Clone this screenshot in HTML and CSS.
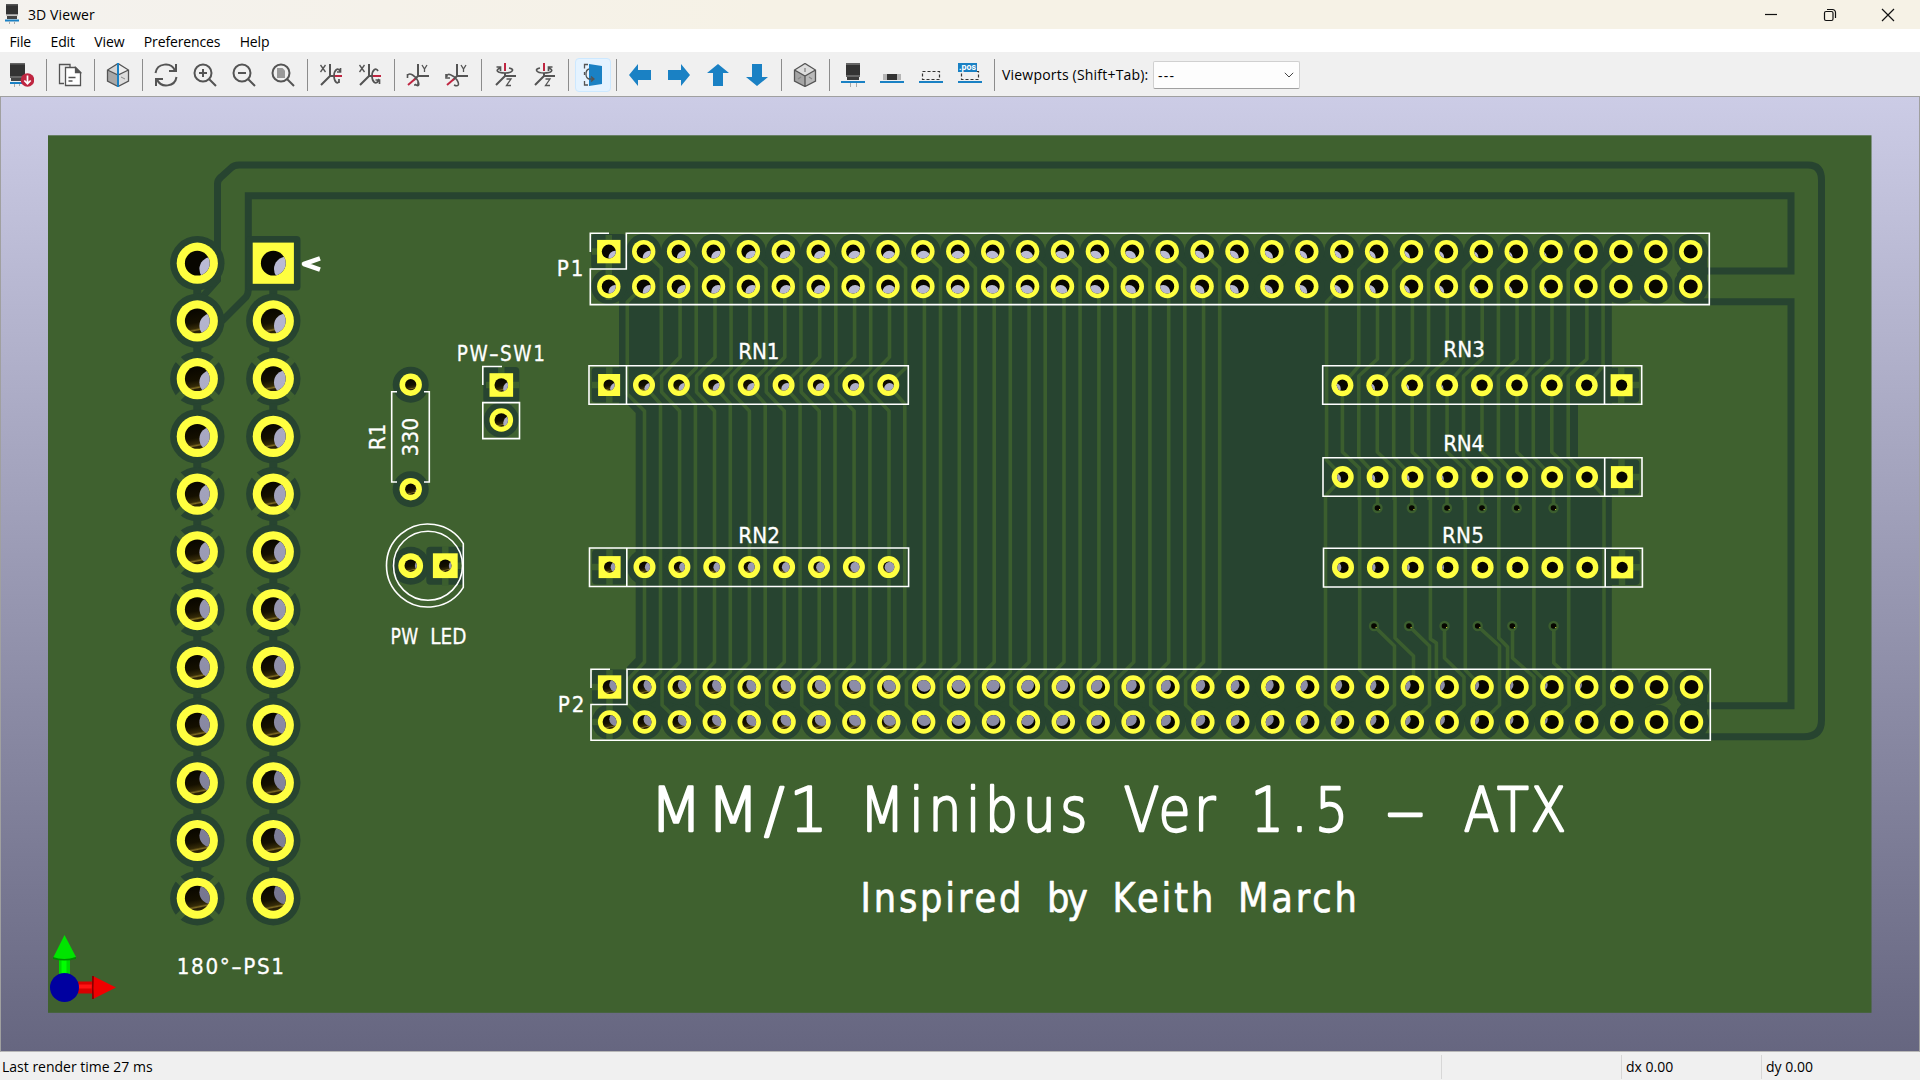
FILE: index.html
```html
<!DOCTYPE html>
<html lang="en">
<head>
<meta charset="utf-8">
<title>3D Viewer</title>
<link rel="stylesheet" href="styles.css">
</head>
<body>
<div class="window">
  <header class="titlebar">
    <svg class="app-icon" viewBox="0 0 14 20"><path fill="#333" d="M1 0h12v11H1z"/><path fill="#555" d="M1 0h12v1.500H1z"/><path fill="#999" d="M1 10h12v1.500H1z"/><path fill="#444" d="M2 12h10v3H2z"/><path fill="#1a81c4" d="M0 15.500h14v2H0z"/><path stroke="#aaa" d="M4.500 17.500V20M9.500 17.500V20"/></svg>
    <span class="title">3D Viewer</span>
    <div class="window-buttons">
      <svg viewBox="0 0 14 14"><path d="M1 6.500h12"/></svg>
      <svg viewBox="0 0 14 14"><rect x="1.500" y="3.500" width="8.500" height="9" rx="1.500"/><path d="M4 1.500h5.500a3 3 0 0 1 3 3V10"/></svg>
      <svg viewBox="0 0 14 14"><path d="M1 1l12 12M13 1L1 13"/></svg>
    </div>
  </header>
  <nav class="menubar"><span>File</span><span>Edit</span><span>View</span><span>Preferences</span><span>Help</span></nav>
  <div class="toolbar">
    <button class="tool"><svg viewBox="0 0 24 24"><path fill="#333" d="M0 0h15v13H0z"/><path fill="#666" d="M0 0h15v1.500H0zM0 13h15v2H0z"/><path fill="#444" d="M1 15h13v3H1z"/><path fill="#1a81c4" d="M0 19h14v2H0z"/><path stroke="#aaa" d="M4.500 21v3M9.500 21v2"/><circle cx="17.500" cy="17" r="6.800" fill="#bf2641"/><path d="M17.500 12.500v8M14.300 17.500l3.200 3.200 3.200-3.200" fill="none" stroke="#fff" stroke-width="1.700"/></svg></button>
    <i class="sep"></i>
    <button class="tool"><svg viewBox="0 0 24 24" class="line"><path d="M6 20.500H1.500v-19H12V4"/><path fill="#fff" d="M7.500 4.500h10l5 5V22.500h-15z"/><path fill="#545454" d="M17.500 4.500v5h5z"/><path d="M10.500 14.500h7M10.500 18h4"/></svg></button>
    <i class="sep"></i>
    <button class="tool"><svg viewBox="0 0 24 24"><path fill="#ddd" d="M12 .500l10.500 6.500v11L12 23.500z"/><path fill="#eee" d="M12 .500L22.500 7 12 12z"/><path fill="#a8a8a8" d="M12 12v11.500L1.500 18V7z"/><path fill="#d5d5d5" d="M12 .500V12L1.500 7z"/><path class="line" d="M12 .500L22.500 7v11L12 23.500 1.500 18V7zM1.500 7L12 12l10.500-5" stroke="#545454" fill="none"/><path d="M15 14l4 2" stroke="#888"/><path stroke="#1a81c4" stroke-width="2" d="M12 0v24"/></svg></button>
    <i class="sep"></i>
    <button class="tool"><svg viewBox="0 0 24 24" class="thick"><path d="M1.500 10C3 0 17-1.500 21 7.500M22 1v7h-7"/><path d="M22.500 14C21 24 7 25.500 3 16.500M2 23v-7h7"/></svg></button>
    <button class="tool"><svg viewBox="0 0 24 24" class="thick"><circle cx="10" cy="10" r="8.500"/><path d="M16 16l7 7M10 6v8M6 10h8"/></svg></button>
    <button class="tool"><svg viewBox="0 0 24 24" class="thick"><circle cx="10" cy="10" r="8.500"/><path d="M16 16l7 7M6 10h8"/></svg></button>
    <button class="tool"><svg viewBox="0 0 24 24" class="thick"><circle cx="10" cy="10" r="8.500"/><path d="M16 16l7 7"/><path fill="#999" stroke="none" d="M6 5h5.500L14 7.500V15H6z"/></svg></button>
    <i class="sep"></i>
    <button class="tool"><svg viewBox="0 0 24 24" class="thick"><path d="M11 1v12L2 22M11 13h3"/><path stroke-width="1.300" d="M1.500 2l5 7M6.500 2l-5 7"/><path stroke="#bf2641" d="M14 13h9"/><path stroke-width="1.700" d="M21 8c-2-4-6-1-6 5s4 9 5 5M18 9h3.500V5M20 16v4"/></svg></button>
    <button class="tool"><svg viewBox="0 0 24 24" class="thick"><path d="M11 1v12L2 22M11 13h3"/><path stroke-width="1.300" d="M1.500 2l5 7M6.500 2l-5 7"/><path stroke="#bf2641" d="M14 13h9"/><path stroke-width="1.700" d="M20 8c-2-4-6-1-6 5s4 9 6 5l1-2M17.500 17h4v4"/></svg></button>
    <i class="sep"></i>
    <button class="tool"><svg viewBox="0 0 24 24" class="thick"><path d="M12 1v12h11M12 13l-4 4"/><path stroke-width="1.300" d="M16 2l2.500 4L21 2M18.500 6v3"/><path stroke="#bf2641" d="M9 16l-7 6"/><path stroke-width="1.600" d="M2 12c1-3 8 1 10 6s0 6-3 3M1.500 15v-4M12 18v4H8"/></svg></button>
    <button class="tool"><svg viewBox="0 0 24 24" class="thick"><path d="M12 1v12h11M12 13l-4 4"/><path stroke-width="1.300" d="M16 2l2.500 4L21 2M18.500 6v3"/><path stroke="#bf2641" d="M9 16l-7 6"/><path stroke-width="1.600" d="M2 14c-1-5 7-2 10 3s1 7-3 5M1 11v4h4"/></svg></button>
    <i class="sep"></i>
    <button class="tool"><svg viewBox="0 0 24 24" class="thick"><path d="M12 10v3h11M12 13l-9 9"/><path stroke-width="1.300" d="M13.500 16h4.500l-4.500 6.500H18"/><path stroke="#bf2641" d="M12 0v8"/><path stroke-width="1.700" d="M16 5c6 1 4 5-4 5S2 7 7 5M3.500 4h4v4"/></svg></button>
    <button class="tool"><svg viewBox="0 0 24 24" class="thick"><path d="M12 10v3h11M12 13l-9 9"/><path stroke-width="1.300" d="M13.500 16h4.500l-4.500 6.500H18"/><path stroke="#bf2641" d="M12 0v8"/><path stroke-width="1.700" d="M8 5c-6 1-4 5 4 5s10-3 5-5M20.500 4h-4v4"/></svg></button>
    <i class="sep"></i>
    <button class="tool active"><svg viewBox="0 0 24 24" class="line"><path d="M7 1.500H3.500v4M3.500 9v3M3.500 18v4H7" stroke-width="1.300"/><path fill="#1a81c4" stroke="none" d="M8 1l13 2v18L8 23z"/><path d="M8 6c-4 1-4 9 0 10h4M10 13.500l3 2.500-3 2.500" stroke-width="1.300"/></svg></button>
    <i class="sep"></i>
    <button class="tool"><svg viewBox="0 0 24 24" class="arrow"><path d="M1 12L10 1v6h13v10H10v6z"/></svg></button>
    <button class="tool"><svg viewBox="0 0 24 24" class="arrow"><path d="M23 12L14 1v6H1v10h13v6z"/></svg></button>
    <button class="tool"><svg viewBox="0 0 24 24" class="arrow"><path d="M12 1l11 9h-6v13H7V10H1z"/></svg></button>
    <button class="tool"><svg viewBox="0 0 24 24" class="arrow"><path d="M12 23l11-9h-6V1H7v13H1z"/></svg></button>
    <i class="sep"></i>
    <button class="tool"><svg viewBox="0 0 24 24"><path fill="#b9b9b9" d="M12 .500L22.500 7v11L12 23.500 1.500 18V7z"/><path fill="#ddd" d="M12 .500L22.500 7 12 13 1.500 7z"/><path fill="#a5a5a5" d="M1.500 7L12 13v10.500L1.500 18z"/><path d="M12 .500L22.500 7v11L12 23.500 1.500 18V7zM1.500 7L12 13l10.500-6M12 13v10.500" stroke="#545454" stroke-width="1.300" fill="none"/><path d="M12 5v4M5 16l3-2M16 14l3 2" stroke="#888" stroke-width="1.300"/></svg></button>
    <i class="sep"></i>
    <button class="tool"><svg viewBox="0 0 24 24"><path stroke="#aaa" d="M9.500 19v5M15.500 19v5"/><path fill="#333" d="M5 0h14v12H5z"/><path fill="#666" d="M5 0h14v2H5zM5 12h14v2H5z"/><path fill="#3a3a3a" d="M6 14h12v3H6z"/><path fill="#1a81c4" d="M0 18h24v2H0z"/></svg></button>
    <button class="tool"><svg viewBox="0 0 24 24"><path fill="#b5b5b5" d="M3 11h18v6H3z"/><path fill="#333" d="M7 11h10v6H7z"/><path fill="#1a81c4" d="M0 18h24v2H0z"/></svg></button>
    <button class="tool"><svg viewBox="0 0 24 24"><path d="M3.500 8.500h17v8h-17z" fill="none" stroke="#333" stroke-width="1.200" stroke-dasharray="3 2"/><path fill="#1a81c4" d="M0 18h24v2H0z"/></svg></button>
    <button class="tool"><svg viewBox="0 0 24 24"><path d="M3.500 8.500h17v8h-17z" fill="none" stroke="#333" stroke-width="1.200" stroke-dasharray="3 2"/><path fill="#1a81c4" d="M0 18h24v2H0zM0 0h19v9H0z"/><text x="1" y="6.800" font-family="Roboto, sans-serif" font-weight="700" font-size="9" textLength="17" lengthAdjust="spacingAndGlyphs" fill="#fff">.pos</text></svg></button>
    <i class="sep"></i>
    <label class="viewports">Viewports (Shift+Tab):</label>
    <div class="combo"><span>---</span><svg viewBox="0 0 10 6"><path d="M.800.800L5 5 9.200.800"/></svg></div>
  </div>

  <main class="viewport">
    <svg class="scene" viewBox="0 97 1920 954">
      <defs>
        <linearGradient id="sky" gradientUnits="userSpaceOnUse" x1="0" y1="97" x2="0" y2="1051"><stop offset="0" stop-color="#cccce6"/><stop offset="1" stop-color="#666680"/></linearGradient>
        <linearGradient id="barrel" x1="0.400" y1="0" x2="0.600" y2="1"><stop offset="0" stop-color="#080600"/><stop offset=".55" stop-color="#151000"/><stop offset=".78" stop-color="#352b08"/><stop offset=".85" stop-color="#806c22"/><stop offset=".9" stop-color="#2a2106"/></linearGradient>
      </defs>
      <rect x="48" y="135.300" width="1823.500" height="877.500" class="board"/>

      <g class="gap-line">
        <path d="M197 303L217.500 280V184Q217.500 180 221 177L231 168Q234 165 239 165H1808Q1821.500 165 1821.500 180V720Q1821.500 736.700 1804 736.700H1692"/>
        <path d="M222 321L246 297Q248.300 294 248.300 290V195.700H1791V271H1691"/>
        <path d="M1691 301.700H1791V705.700H1691"/>
      </g>
      <path class="gap" d="M609 252H1656V286H1640V300H1611.800V404H1578V457H1611.800V687H1656V722H609V704H627V667L635.700 658V413L627 404H619V286H609z"/>
      <path class="gap" d="M1677 252H1707V286H1677zM1677 687H1707V722H1677z"/>
      <g id="gaps"></g>
      <path class="gap" d="M1578 376h30v20h-30zM1578 468h30v30h-30z"/>
      <path class="board" d="M1673.500 259L1681 268.500L1673.500 278L1666 268.500zM1673.500 695L1681 704.500L1673.500 714L1666 704.500zM1672.500 240h2v60h-2zM1672.500 674h2v60h-2z"/>
      <g id="tracks" class="track"></g>
      <g class="spoke">
        <path d="M608.800 235V300M592 251.500H604M609.300 367V403M592 385H604M609.500 549V585M592 567H604M609.500 670V740M592 687H604M592 722H604"/>
        <path d="M1621.200 367V403M1622 385H1641M1621.500 459V495M1622 477H1641M1622 549V586M1622 567.300H1641M501.300 367V385M486 385H519M445.300 546V586M445 565.700H464"/>
      </g>
      <g id="pads"></g>

      <g class="silk">
        <path d="M590.300 252V233.200H609M626.300 233.200H1709.300V304.600H590.300V269H626.300z"/>
        <path d="M591 688V669.200H610M627 669.200H1710.300V740.300H591V704.500H627z"/>
        <path d="M589 365.700H908.300V404.200H589zM626.500 365.700V404.200"/>
        <path d="M589.500 548H908.600V586.500H589.500zM626.800 548V586.500"/>
        <path d="M1322.700 365.700H1641.700V404.300H1322.700zM1604.500 365.700V404.300"/>
        <path d="M1323 457.700H1642V496.300H1323zM1604.700 457.700V496.300"/>
        <path d="M1323.500 548.300H1642.400V587H1323.500zM1605.200 548.300V587"/>
        <path d="M397 391.700H391.700V482H397M424 391.700H429.300V482H424"/>
        <path d="M482.800 385V366.500H502M482.800 402.600H519.500V438.600H482.800z"/>
        <path d="M463.300 543.700A41.500 41.500 0 1 0 463.300 587.300z"/><circle cx="428" cy="565.700" r="34.500"/>
        <path d="M320 258.300L304 264L320 269.700" stroke-width="4.600" stroke-linejoin="round"/>
      </g>
      <g id="labels" class="label"></g>

      <g>
        <path fill="#00d800" d="M59 957h11v20H59z"/><path fill="#00ff00" d="M61.500 957h5v20h-5z"/>
        <path fill="#00e400" d="M64.500 935L76 957q-11 5-23 1z"/><path fill="#008a00" d="M53 957q11 4 23 0v2q-12 3-23 0z"/>
        <path fill="#d80000" d="M78 981.500h16v12H78z"/><path fill="#ff1414" d="M78 984.500h16v4H78z"/>
        <path fill="#f00000" d="M116 987.500L93 976q-3 12 0 23z"/><path fill="#8a0000" d="M92 976h2q-1 12 0 23h-2z"/>
        <circle cx="64.500" cy="987.500" r="14.500" fill="#0000a0"/>
      </g>
    </svg>
  </main>
  <footer class="statusbar"><span class="s-main">Last render time 27 ms</span><span class="s-b"></span><span class="s-c">dx 0.00</span><span class="s-d">dy 0.00</span></footer>
</div>
<script src="board.js"></script>
</body>
</html>
```
FILE: styles.css
```css
* { box-sizing: border-box; }
body { margin: 0; width: 1920px; height: 1080px; overflow: hidden; background: #f0f0f0; color: #000; font-family: "Open Sans", "Noto Sans", sans-serif; font-size: 14px; letter-spacing: -0.25px; }
.window { display: flex; flex-direction: column; height: 1080px; }
.titlebar { display: flex; align-items: center; height: 29px; padding-left: 5px; background: linear-gradient(90deg, #f4f2ee, #f6f2e6 40%); }
.app-icon { width: 14px; height: 20px; margin-top: -1px; }
.title { margin-left: 9px; letter-spacing: 0.1px; }
.window-buttons { display: flex; gap: 44.5px; margin-left: auto; padding-right: 25px; }
.window-buttons svg { width: 14px; height: 14px; fill: none; stroke: #111; stroke-width: 1.2; }
.menubar { display: flex; align-items: center; gap: 19.5px; height: 23px; padding: 1px 0 0 9.5px; background: #fff; letter-spacing: -0.15px; }
.toolbar { display: flex; align-items: center; height: 44px; padding: 2px 0 0 2px; background: #f0f0f0; }
.tool { display: flex; align-items: center; justify-content: center; width: 39px; height: 34px; padding: 0; border: 0; background: none; }
.tool svg { width: 24px; height: 24px; }
.tool.active { width: 36px; margin: 0 0 0 3px; padding-right: 1px; border: 1px solid #cce8ff; border-radius: 4px; background: #e5f3ff; }
.sep { width: 1px; height: 32px; margin: 0 3px 0 5px; background: #8c8c8c; }
.line { fill: none; stroke: #545454; stroke-width: 1.3; }
.thick { fill: none; stroke: #545454; stroke-width: 2; }
.arrow { fill: #1a81c4; }
.viewports { margin: -2px 0 0 4px; width: 151px; white-space: nowrap; letter-spacing: 0.2px; }
.combo { display: flex; align-items: center; justify-content: space-between; width: 147px; height: 28px; padding: 0 5px 0 4px; border: 1px solid #d0d0d0; border-bottom-color: #a0a0a0; border-radius: 2px; background: #fdfdfd; letter-spacing: 1.2px; }
.combo svg { width: 10px; height: 6px; fill: none; stroke: #444; }
.viewport { height: 956px; border: 1px solid #a0a0a0; border-bottom-color: #b8b8b8; background: linear-gradient(#cccce6, #666680); }
.scene { display: block; width: 1920px; height: 954px; margin-left: -1px; }
.board { fill: #3f612f; }
.gap { fill: #274430; }
.gap-line { fill: none; stroke: #274430; stroke-width: 7; }
.track { fill: none; stroke: #3b5e2e; stroke-width: 3.6; stroke-linejoin: round; }
.spoke { fill: none; stroke: #3b5e2e; stroke-width: 6.5; }
.silk { fill: none; stroke: #fff; stroke-width: 1.6; }
.label { fill: #fff; stroke: #fff; stroke-linejoin: round; font-family: "DejaVu Sans", sans-serif; letter-spacing: 0; }
.statusbar { display: flex; align-items: center; height: 28px; padding-top: 1px; letter-spacing: 0; }
.statusbar span { display: flex; align-items: center; height: 24px; padding-left: 4px; border-left: 1px solid #d7d7d7; }
.statusbar .s-main { width: 1441px; padding-left: 2px; border: 0; }
.s-b { width: 180px; }
.s-c { width: 140px; }
```
FILE: board.js
```js
const NS = 'http://www.w3.org/2000/svg';
const layer = id => document.getElementById(id);
function add(parent, tag, attrs) {
  const el = document.createElementNS(NS, tag);
  for (const k in attrs) el.setAttribute(k, attrs[k]);
  parent.appendChild(el);
  return el;
}
const PITCH = 34.9;
let holeCount = 0;

// A plated hole; its far end is displaced towards the centre of the view.
function pad(x, y, r, hole, clear, square, thermal) {
  if (square) {
    add(layer('gaps'), 'rect', { x: x - clear, y: y - clear, width: 2 * clear, height: 2 * clear, rx: 4, class: 'gap' });
    add(layer('pads'), 'rect', { x: x - r, y: y - r, width: 2 * r, height: 2 * r, fill: '#ffff40' });
  } else {
    add(layer('gaps'), 'circle', { cx: x, cy: y, r: clear, class: 'gap' });
    if (thermal) {
      const d = clear * 0.72;
      add(layer('gaps'), 'path', { d: `M${x - d} ${y - d}L${x + d} ${y + d}M${x - d} ${y + d}L${x + d} ${y - d}`, stroke: '#3f612f', 'stroke-width': 7 });
    }
    add(layer('pads'), 'circle', { cx: x, cy: y, r, fill: '#ffff40' });
  }
  const id = 'hole' + holeCount++;
  const clip = add(layer('pads'), 'clipPath', { id });
  add(clip, 'circle', { cx: x, cy: y, r: hole });
  add(layer('pads'), 'circle', { cx: x, cy: y, r: hole, fill: x < 900 && y > 300 ? 'url(#barrel)' : '#080600' });
  add(layer('pads'), 'circle', { cx: x + (960 - x) * 0.0187, cy: y + (573 - y) * 0.0187, r: hole * 0.98, fill: 'url(#sky)', 'clip-path': `url(#${id})` });
}

// Power connector
const grounds = { 197.3: [2, 4, 5, 6, 11], 273.3: [2, 4, 6] };
for (const x of [197.3, 273.3]) {
  for (let i = 0; i < 12; i++) {
    const y = 263.2 + i * 57.73;
    if (i) add(layer('gaps'), 'rect', { x: x - 4, y: y - 33, width: 8, height: 8, class: 'gap' });
    pad(x, y, 20.6, 12.4, 27.2, i === 0 && x > 200, grounds[x].includes(i));
  }
}
// Bus connectors
for (let k = 0; k < 32; k++) {
  pad(608.8 + k * PITCH, 251.6, 11.7, 7, 17.6, k === 0);
  pad(608.8 + k * PITCH, 286.5, 11.7, 7, 17.6);
  pad(609.6 + k * PITCH, 687, 11.7, 7, 17.6, k === 0);
  pad(609.6 + k * PITCH, 722, 11.7, 7, 17.6);
}
// Resistor networks
for (let k = 0; k < 9; k++) {
  pad(609.1 + k * PITCH, 385, 11, 5.6, 17.5, k === 0);
  pad(609.6 + k * PITCH, 567.1, 11, 5.6, 17.5, k === 0);
  pad(1342.4 + k * PITCH, 385.2, 11, 5.6, 17.5, k === 8);
  pad(1342.7 + k * PITCH, 477.1, 11, 5.6, 17.5, k === 8);
  pad(1343 + k * PITCH, 567.4, 11, 5.6, 17.5, k === 8);
}
pad(410.7, 384.7, 11.2, 5.6, 18);
pad(410.7, 489.2, 11.2, 5.6, 18);
pad(501.3, 385, 11.8, 6.8, 18, true);
pad(501.3, 420, 11.8, 6.8, 17.5);
pad(410.7, 565.7, 12.4, 6.2, 19);
pad(445.3, 565.7, 12.4, 6.2, 19, true);

// Tracks
const track = d => add(layer('tracks'), 'path', { d });
track('M643.700 286L627.300 302V394L644.500 411V662L627.500 680V704L644.500 722');
for (let k = 1; k <= 17; k++) {
  const x = 608.8 + k * PITCH;
  if (k <= 8) {
    track(`M${x} 251L${x + 17.6} 268V368L${x} 385L${x + 16.8} 404V672L${x} 687`);
  } else {
    track(`M${x} 251L${x + 17.6} 268V672L${x} 689`);
  }
  if (k < 2) continue;
  const end = `V662L${x - 16.5} 680V705L${x + 1} 722`;
  if (k <= 8) track(`M${x + 1.5} 286V357L${x - 17} 376V392L${x + 1} 411${end}`);
  else track(`M${x + 1.5} 286${end}`);
}
track('M1341.600 286L1326.600 302V460L1342.700 477L1325.500 496V705L1343 722');
for (let j = 0; j < 8; j++) {
  const d = j * PITCH;
  track(`M${1376.6 + d} 251L${1358.8 + d} 270V366L${1342.4 + d} 385`);
  if (j === 7) break;
  track(`M${1377.5 + d} 286V359L${1358.8 + d} 376V457L${1377.5 + d} 477`);
  track(`M${1342.4 + d} 385V452L${1359.3 + d} 468V500`);
}
track('M1586.800 477L1604 496V705L1586 722');
[1359.7, 1395, 1430.4, 1465.3, 1498.8, 1533.9, 1568.7].forEach((x, i) => {
  const tail = ['V670L1377 687', 'V638L1413.500 656V687', 'V639L1436.400 643V677L1447 687', 'V670L1482 687', 'V638L1507.600 647V678L1517 687', 'V670L1552 687', 'V670L1586 687'][i];
  track(`M${x} 496${tail}`);
});
[['1374 626L1394.500 646', 1377], ['1409 626L1429.500 646', 1412], ['1444.500 626V658L1464 677', 1447], ['1477.500 626L1499.500 646', 1482], ['1512.500 626V658L1534 677', 1517], ['1553.800 626V663L1569 677', 1552]]
  .forEach(([d, x]) => track(`M${d}V705L${x} 722`));
const viasTop = [1377.5, 1411.8, 1447, 1482, 1516.7, 1553.5];
viasTop.forEach(x => track(`M${x} 477V508`));
const via = (x, y) => {
  add(layer('pads'), 'circle', { cx: x, cy: y, r: 5.2, fill: '#3b5e2e' });
  add(layer('pads'), 'circle', { cx: x, cy: y, r: 2.8, fill: '#080600' });
  add(layer('pads'), 'rect', { x: x + 1.6, y: y + 1, width: 1, height: 1, fill: '#d8d83a' });
};
viasTop.forEach(x => via(x, 508));
[1374, 1409, 1444.5, 1477.7, 1512.3, 1553.6].forEach(x => via(x, 626));

// Silkscreen lettering, spaced so that the ink runs from x0 to x1
// (for turned labels, upwards from y = x0 to y = x1 on the baseline x = y)
const pen = document.createElement('canvas').getContext('2d');
function label(text, x0, x1, y, size, opt = {}) {
  const sx = opt.sx || 0.93, weight = opt.weight || 400;
  const length = Math.abs(x1 - x0);
  pen.font = `${weight} ${size}px "DejaVu Sans"`;
  const m = pen.measureText(text);
  const ink = m.actualBoundingBoxLeft + m.actualBoundingBoxRight;
  const n = text.length - 1;
  const scale = n ? sx : length / ink;
  const spacing = n ? (length / scale - ink) / n : 0;
  const pos = opt.turn ? `translate(${y} ${x0}) rotate(-90)` : `translate(${x0} ${y})`;
  const t = add(layer('labels'), 'text', {
    transform: `${pos} scale(${scale} 1)`, x: m.actualBoundingBoxLeft,
    'font-size': size, 'font-weight': weight, 'stroke-width': opt.stroke ?? 0.3, style: `letter-spacing:${spacing}px`
  });
  t.textContent = text;
}
label('P1', 558.5, 582, 276, 21.5);
label('P2', 559.5, 583, 711.7, 21.5);
label('RN1', 740, 778, 358.5, 21.5);
label('RN2', 740, 778.5, 543, 21.5);
label('RN3', 1445, 1483.5, 357, 21.5);
label('RN4', 1445, 1483.7, 450.7, 21.5);
label('RN5', 1443.8, 1482.5, 542.7, 21.5);
label('PW–SW1', 458.5, 543.5, 360.5, 21.5, { sx: 0.86 });
label('PW', 392, 418, 643.7, 21.5, { sx: 0.8 });
label('LED', 432, 466, 643.7, 21.5, { sx: 0.86 });
label('180°–PS1', 178.5, 282.5, 974.3, 21.5);
label('R1', 448.5, 425, 384.7, 21.5, { turn: true });
label('330', 455.5, 418.5, 418, 21.5, { turn: true });
const big = { weight: 200, stroke: 2.3, sx: 0.86 };
label('MM/1', 659, 821.2, 831, 60.5, { weight: 200, stroke: 2.3, sx: 1 });
label('Minibus', 867.5, 1084.5, 831, 60.5, big);
label('Ver', 1124.5, 1215.5, 831, 60.5, big);
label('1.5', 1256, 1342.5, 831, 60.5, big);
label('–', 1388, 1422, 831, 60.5, big);
label('ATX', 1464.5, 1564, 831, 60.5, big);
const mid = { sx: 0.85, stroke: 0.7 };
label('Inspired', 864, 1018.5, 912.3, 41.5, mid);
label('by', 1049.5, 1087.5, 912.3, 41.5, mid);
label('Keith', 1116, 1210.5, 912.3, 41.5, mid);
label('March', 1241.5, 1354, 912.3, 41.5, mid);
```
